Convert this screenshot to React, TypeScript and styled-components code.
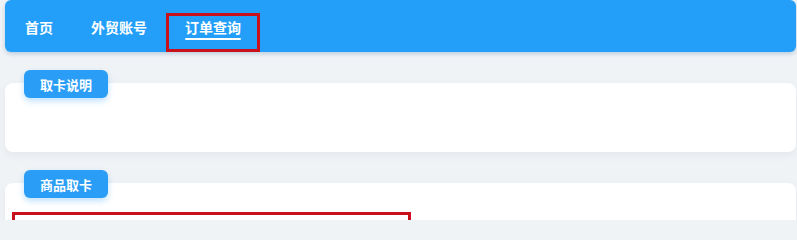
import React from 'react';
import styled, { createGlobalStyle } from 'styled-components';

const GlobalStyle = createGlobalStyle`
  html, body {
    margin: 0;
    padding: 0;
    background: #f0f3f6;
    font-family: "Noto Sans CJK SC", "Noto Sans", sans-serif;
  }
`;

const Page = styled.div`
  padding: 0 1px 0 5px;
  height: 220px;
  overflow: hidden;
`;

const NavBar = styled.nav`
  display: flex;
  align-items: flex-end;
  height: 52px;
  padding-left: 1px;
  background: #249ff9;
  border-radius: 6px;
  box-shadow: 0 2px 4px rgba(30, 90, 150, 0.25);
`;

const NavItem = styled.a<{ $active?: boolean }>`
  display: flex;
  flex-direction: column;
  align-items: center;
  box-sizing: border-box;
  height: 39px;
  padding: 4px 19px 0;
  color: #ffffff;
  font-size: 14px;
  font-weight: 700;
  line-height: 20px;
  outline: ${(p) => (p.$active ? '3px solid #c8111b' : 'none')};
  outline-offset: -3px;
`;

const Underline = styled.span`
  display: block;
  width: 100%;
  height: 2px;
  margin-top: 1px;
  background: #ffffff;
  border-radius: 1px;
`;

const Section = styled.section`
  margin-top: 18px;
`;

const Tag = styled.div`
  position: relative;
  z-index: 1;
  display: flex;
  align-items: center;
  width: max-content;
  height: 28px;
  margin-left: 19px;
  margin-bottom: -15px;
  padding: 0 16px;
  background: #2a9df6;
  color: #ffffff;
  font-size: 13px;
  font-weight: 700;
  border-radius: 6px;
  box-shadow: 0 3px 6px rgba(42, 157, 246, 0.3);
`;

const Card = styled.div<{ $height: number }>`
  box-sizing: border-box;
  height: ${(p) => p.$height}px;
  padding: 29px 7px 0;
  background: #ffffff;
  border-radius: 8px;
  box-shadow: 0 3px 8px rgba(60, 80, 110, 0.07);
`;

const Highlight = styled.div`
  width: 399px;
  height: 40px;
  box-sizing: border-box;
  border: 3px solid #c8111b;
`;

const tabs = ['首页', '外贸账号', '订单查询'];

export default function App() {
  return (
    <>
      <GlobalStyle />
      <Page>
        <NavBar>
          {tabs.map((t, i) => (
            <NavItem key={t} $active={i === 2}>
              {t}
              {i === 2 && <Underline />}
            </NavItem>
          ))}
        </NavBar>
        <Section>
          <Tag>取卡说明</Tag>
          <Card $height={69} />
        </Section>
        <Section>
          <Tag>商品取卡</Tag>
          <Card $height={80}>
            <Highlight />
          </Card>
        </Section>
      </Page>
    </>
  );
}
